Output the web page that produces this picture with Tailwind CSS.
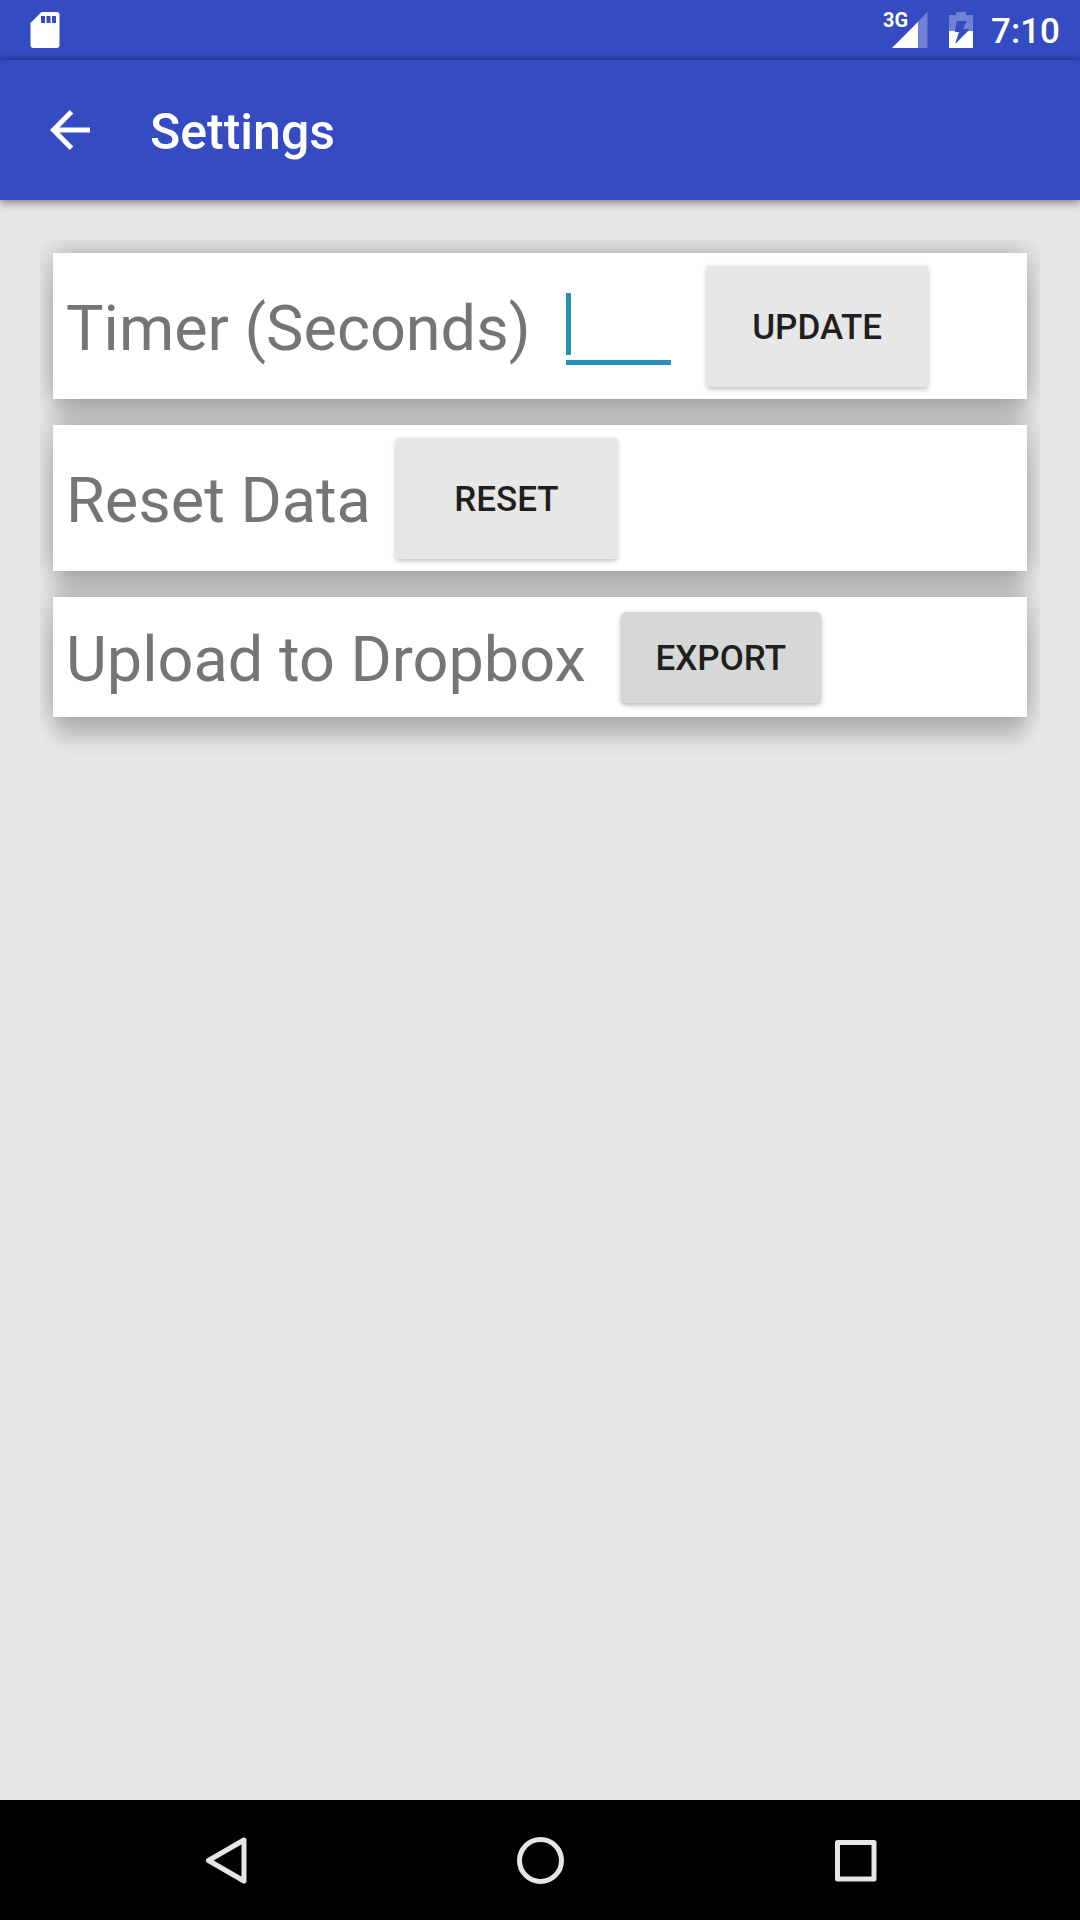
<!DOCTYPE html>
<html lang="en">
<head>
<meta charset="utf-8">
<meta name="viewport" content="width=device-width, initial-scale=1">
<title>Settings</title>
<script src="https://cdn.jsdelivr.net/npm/@tailwindcss/browser@4"></script>
</head>
<body class="flex min-h-screen flex-col bg-[#e7e7e7] font-[Roboto,sans-serif] text-[#1f1f1f]">
  <!-- Status bar -->
  <div class="flex h-[60px] items-center justify-between bg-[#354bc1] pr-5 pl-[30px] text-white">
    <svg class="h-9 w-[30px]" viewBox="0 0 30 36" fill="currentColor" role="img" aria-label="SD card"><path fill-rule="evenodd" d="M11.500 0H26.500Q29.500 0 29.500 3V33Q29.500 36 26.500 36H3.500Q.5 36 .5 33V11ZM11 4V11H15V4ZM16.500 4V11H20.500V4ZM22 4V11H26V4Z"/></svg>
    <div class="flex items-center">
      <div class="relative">
        <svg class="h-9 w-[46px]" viewBox="0 0 46 36" fill="currentColor" role="img" aria-label="Signal strength">
          <path opacity=".3" d="M44.500 0V36H9Z"/><path d="M35 10V36H9Z"/>
        </svg>
        <span class="absolute -top-1 left-0 font-['Liberation_Sans_Narrow',Roboto,sans-serif] text-[20px] leading-6 font-bold">3G</span>
      </div>
      <svg class="ml-5 h-9 w-6" viewBox="0 0 24 36" fill="currentColor" role="img" aria-label="Battery charging">
        <path opacity=".3" fill-rule="evenodd" d="M7 0H17V3H24V19H19L20 17H14L18 9H8L6 19H0V3H7Z"/>
        <path fill-rule="evenodd" d="M0 19H6V20H10L6 32L19 19H24V36H0Z"/>
      </svg>
      <time class="ml-[18px] pt-1 text-[35px] leading-[40px] font-medium">7:10</time>
    </div>
  </div>

  <!-- App bar -->
  <header class="relative flex h-[140px] items-center bg-[#354bc1] pl-[50px] text-white shadow-[0_3px_10px_rgba(0,0,0,0.3),0_0_8px_rgba(0,0,0,0.3)]">
    <button type="button" aria-label="Back"><svg class="h-10 w-10" viewBox="0 0 40 40" fill="none" stroke="currentColor" stroke-width="5"><path d="M40 20H4M21.500 1.800L3.500 20L21.500 38.200"/></svg></button>
    <h1 class="ml-[60px] pt-1 text-[50px] leading-[60px] font-medium">Settings</h1>
  </header>

  <main class="grow overflow-hidden px-10 pt-10">
    <div class="flex flex-col gap-[26px] overflow-hidden px-[13px] pt-[13px] pb-16">
      <form class="flex h-[146px] items-center bg-white px-[13px] shadow-[0_26px_18px_-3px_rgba(0,0,0,0.14),0_0_25px_rgba(0,0,0,0.28)]">
        <label for="timer" class="pt-1.5 text-[63px] leading-[74px] text-[#757575]">Timer (Seconds)</label>
        <div class="relative ml-[35px] pt-1.5">
          <input id="timer" type="text" inputmode="numeric" class="block h-[72px] w-[105px] border-b-[5px] border-[#258fb8] text-[50px] caret-transparent outline-none">
          <span class="absolute top-1.5 left-0 h-[62px] w-[5px] bg-[#258fb8]"></span>
        </div>
        <button type="button" class="ml-9 h-[121px] w-[221px] bg-[#e7e7e7] pt-1 text-[35px] font-medium shadow-[0_2px_5px_rgba(0,0,0,0.25)]">UPDATE</button>
      </form>
      <section class="flex h-[146px] items-center bg-white px-[13px] shadow-[0_26px_18px_-3px_rgba(0,0,0,0.14),0_0_25px_rgba(0,0,0,0.28)]">
        <h2 class="pt-1.5 text-[63px] leading-[74px] text-[#757575]">Reset Data</h2>
        <button type="button" class="ml-[25px] h-[121px] w-[221px] bg-[#e7e7e7] pt-1 text-[35px] font-medium shadow-[0_2px_5px_rgba(0,0,0,0.25)]">RESET</button>
      </section>
      <section class="flex h-[120px] items-center bg-white px-[13px] shadow-[0_26px_18px_-3px_rgba(0,0,0,0.14),0_0_25px_rgba(0,0,0,0.28)]">
        <h2 class="pt-1.5 text-[63px] leading-[74px] text-[#757575]">Upload to Dropbox</h2>
        <button type="button" class="ml-[35px] h-[91px] w-[200px] rounded-[5px] bg-[#d6d8d7] pt-1 text-[35px] font-medium shadow-[0_2px_5px_rgba(0,0,0,0.3)]">EXPORT</button>
      </section>
    </div>
  </main>

  <!-- Navigation bar -->
  <nav class="flex h-[120px] items-center justify-center gap-[267px] bg-black text-[#e6e6e6]">
    <button type="button" aria-label="Back"><svg class="h-12 w-12" viewBox="0 0 48 48" fill="none" stroke="currentColor" stroke-width="5" stroke-linejoin="round"><path d="M43 4V45L7.500 24.500Z"/></svg></button>
    <button type="button" aria-label="Home"><svg class="h-12 w-12" viewBox="0 0 48 48" fill="none" stroke="currentColor" stroke-width="5"><circle cx="24.500" cy="24.500" r="21"/></svg></button>
    <button type="button" aria-label="Overview"><svg class="h-12 w-12" viewBox="0 0 48 48" fill="none" stroke="currentColor" stroke-width="5" stroke-linejoin="round"><path d="M6.500 6.500H43V43H6.500Z"/></svg></button>
  </nav>
</body>
</html>
